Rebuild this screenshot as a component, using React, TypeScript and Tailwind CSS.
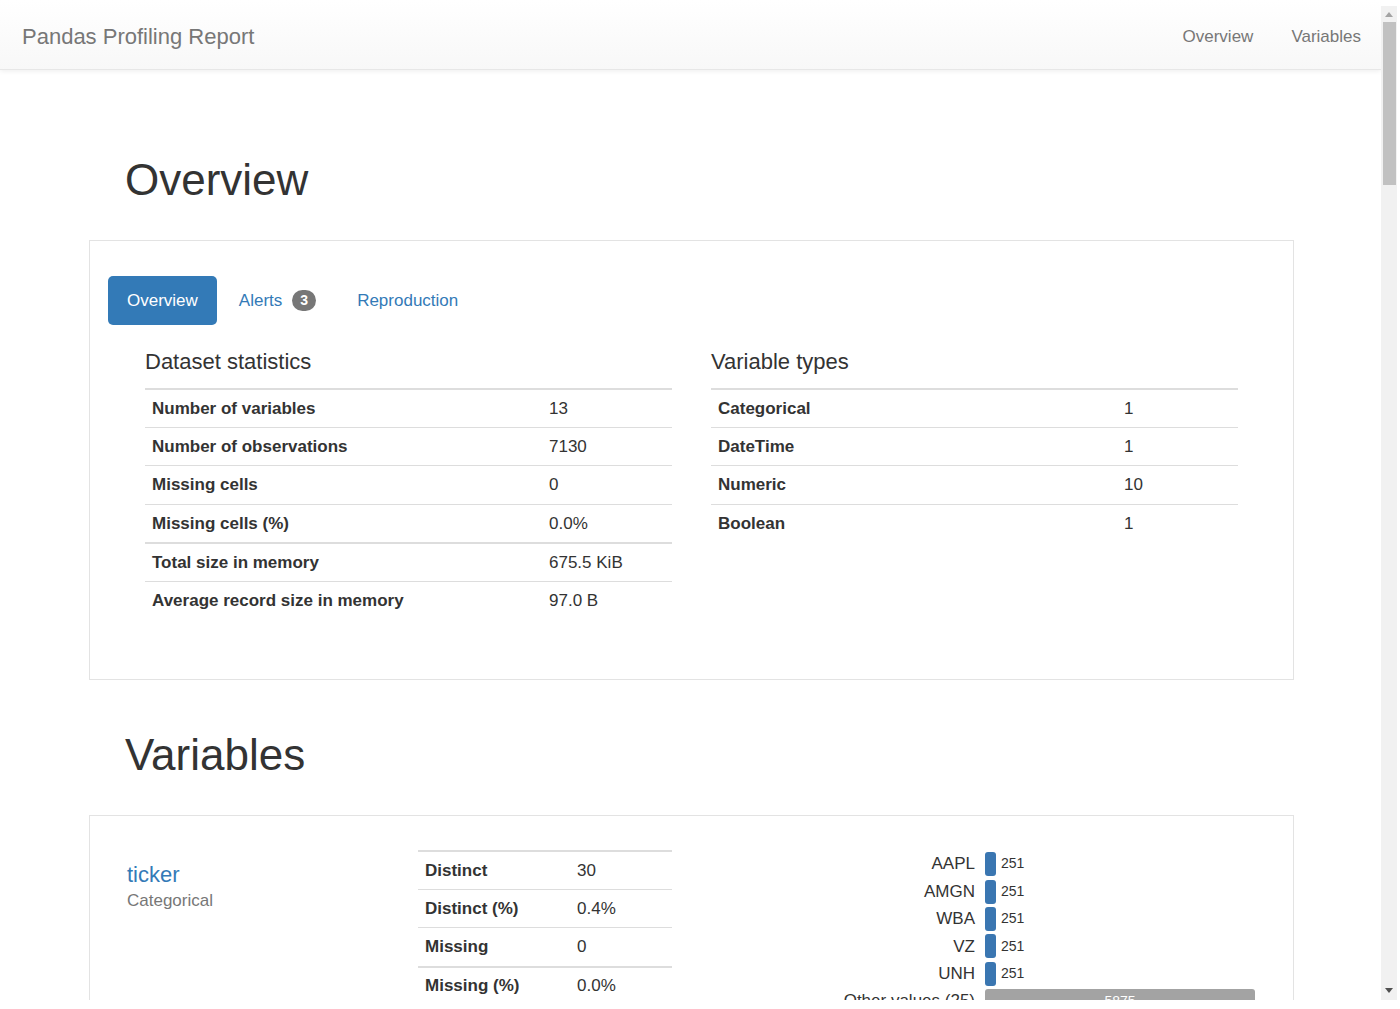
import React from "react";

const datasetStats: [string, string][] = [
  ["Number of variables", "13"],
  ["Number of observations", "7130"],
  ["Missing cells", "0"],
  ["Missing cells (%)", "0.0%"],
  ["Total size in memory", "675.5 KiB"],
  ["Average record size in memory", "97.0 B"],
];

const variableTypes: [string, string][] = [
  ["Categorical", "1"],
  ["DateTime", "1"],
  ["Numeric", "10"],
  ["Boolean", "1"],
];

const tickerStats: [string, string][] = [
  ["Distinct", "30"],
  ["Distinct (%)", "0.4%"],
  ["Missing", "0"],
  ["Missing (%)", "0.0%"],
];

const topValues = ["AAPL", "AMGN", "WBA", "VZ", "UNH"];

function StatTable({
  rows,
  labelWidth,
  width,
  thick = [],
}: {
  rows: [string, string][];
  labelWidth: string;
  width: string;
  thick?: number[];
}) {
  return (
    <div className={width}>
      {rows.map(([label, value], i) => (
        <div
          key={label}
          className={
            "flex items-center h-[38.5px] border-[#dddddd] " +
            (i === 0 || thick.includes(i) ? "border-t-2" : "border-t")
          }
        >
          <div className={`${labelWidth} pl-[7px] font-bold`}>{label}</div>
          <div className="pl-[7px]">{value}</div>
        </div>
      ))}
    </div>
  );
}

const App = () => {
  return (
    <div className="flex w-[1400px] h-[1009px] bg-white font-['Liberation_Sans',Arial,sans-serif] text-[#333333] text-[17px] leading-[23.5px]">
      <div className="w-[1381px] h-[1000px] overflow-hidden">
        {/* navbar */}
        <nav className="h-[70px] flex items-center justify-between pl-[22px] pr-[20px] pt-[4px] bg-gradient-to-b from-white to-[#f8f8f8] border-b border-[#e7e7e7] shadow-[0_1px_5px_rgba(0,0,0,0.075)]">
          <div className="text-[22px] text-[#777777] leading-[24px]">
            Pandas Profiling Report
          </div>
          <div className="flex items-center gap-[38px] text-[#777777] text-[17px]">
            <span>Overview</span>
            <span>Variables</span>
          </div>
        </nav>

        <main className="pl-[89px] w-[1294px]">
          <h1 className="mt-[86px] pl-[36px] text-[44px] leading-[48px] text-[#333333]">
            Overview
          </h1>

          <section className="mt-[36px] border border-[#e3e3e3] pt-[35px] pb-[60px]">
            <div className="flex items-center gap-[3px] pl-[18px] h-[49px]">
              <div className="h-[49px] flex items-center px-[19px] rounded-[5px] bg-[#337ab7] text-white">
                Overview
              </div>
              <div className="h-[49px] flex items-center px-[19px] text-[#337ab7]">
                Alerts
                <span className="ml-[10px] h-[21px] px-[8px] rounded-full bg-[#777777] text-white text-[14px] font-bold leading-[21px]">
                  3
                </span>
              </div>
              <div className="h-[49px] flex items-center px-[19px] text-[#337ab7]">
                Reproduction
              </div>
            </div>

            <div className="flex gap-[39px] pl-[55px] mt-[25px]">
              <div className="w-[527px]">
                <h4 className="text-[22px] leading-[24px]">Dataset statistics</h4>
                <div className="mt-[14px]">
                  <StatTable
                    rows={datasetStats}
                    width="w-[527px]"
                    labelWidth="w-[397px]"
                    thick={[4]}
                  />
                </div>
              </div>
              <div className="w-[527px]">
                <h4 className="text-[22px] leading-[24px]">Variable types</h4>
                <div className="mt-[14px]">
                  <StatTable
                    rows={variableTypes}
                    width="w-[527px]"
                    labelWidth="w-[406px]"
                  />
                </div>
              </div>
            </div>
          </section>

          <h1 className="mt-[51px] pl-[36px] text-[44px] leading-[48px] text-[#333333]">
            Variables
          </h1>

          <section className="mt-[36px] border border-[#e3e3e3] h-[400px] flex">
            <div className="w-[328px] pl-[37px] pt-[47px]">
              <div className="text-[22px] leading-[24px] text-[#337ab7]">ticker</div>
              <div className="mt-[2px] text-[17px] leading-[24px] text-[#777777]">
                Categorical
              </div>
            </div>
            <div className="pt-[34px]">
              <StatTable
                rows={tickerStats}
                width="w-[254px]"
                labelWidth="w-[152px]"
                thick={[3]}
              />
            </div>
            <div className="ml-[38px] pt-[34.5px]">
              {topValues.map((v) => (
                <div key={v} className="flex items-center h-[27.4px]">
                  <div className="w-[275px] text-right pr-[10px]">{v}</div>
                  <div className="w-[11px] h-[24px] rounded-[3px] bg-[#3a76b1]" />
                  <div className="ml-[5px] text-[14px]">251</div>
                </div>
              ))}
              <div className="flex items-center h-[27.4px]">
                <div className="w-[275px] text-right pr-[10px] whitespace-nowrap">
                  Other values (25)
                </div>
                <div className="w-[270px] h-[24px] rounded-[3px] bg-[#a3a3a3] text-white text-[14px] text-center leading-[24px]">
                  5875
                </div>
              </div>
            </div>
          </section>
        </main>
      </div>

      {/* scrollbar */}
      <div className="w-[16px] mt-[6px] h-[994px] bg-[#f1f1f1] flex flex-col items-center">
        <div className="h-[16px] flex items-center justify-center">
          <svg width="8" height="5" viewBox="0 0 8 5">
            <polygon points="4,0 8,5 0,5" fill="#a3a3a3" />
          </svg>
        </div>
        <div className="w-[13px] h-[163px] bg-[#c1c1c1]" />
        <div className="flex-1" />
        <div className="h-[16px] flex items-center justify-center mb-[2px]">
          <svg width="8" height="5" viewBox="0 0 8 5">
            <polygon points="0,0 8,0 4,5" fill="#505050" />
          </svg>
        </div>
      </div>
    </div>
  );
};

export default App;
